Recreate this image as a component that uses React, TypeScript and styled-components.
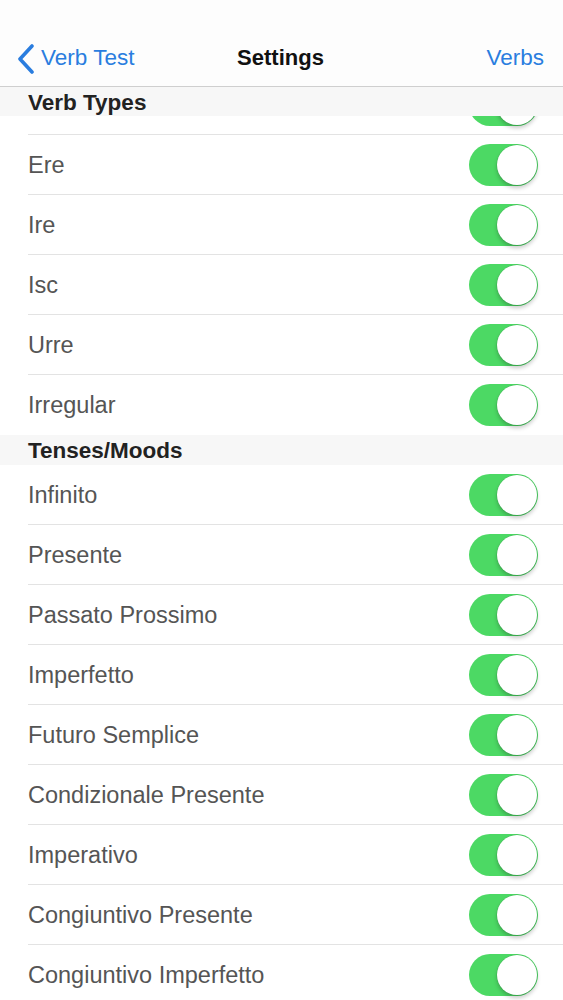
import React from 'react';
import styled, {createGlobalStyle} from "styled-components";

const GlobalStyle = createGlobalStyle`
  html, body {
    margin: 0;
    padding: 0;
    background: #ffffff;
  }
  body {
    font-family: "Liberation Sans", Arial, Helvetica, sans-serif;
  }
`

const verbTypes = ['Ere', 'Ire', 'Isc', 'Urre', 'Irregular'];
const tenses = [
    'Infinito',
    'Presente',
    'Passato Prossimo',
    'Imperfetto',
    'Futuro Semplice',
    'Condizionale Presente',
    'Imperativo',
    'Congiuntivo Presente',
    'Congiuntivo Imperfetto',
];

const Toggle = () => (
    <Track>
        <Knob/>
    </Track>
);

export default function App() {
    return (
        <>
            <GlobalStyle/>
            <Screen>
                <NavBar>
                    <BackButton>
                        <svg width="17" height="30" viewBox="0 0 17 30">
                            <path d="M15 2 L3 15 L15 28" fill="none" stroke="#2a7ddf" strokeWidth="3.6"
                                  strokeLinecap="round" strokeLinejoin="round"/>
                        </svg>
                        <NavLink>Verb Test</NavLink>
                    </BackButton>
                    <NavTitle>Settings</NavTitle>
                    <RightSlot>
                        <NavLink>Verbs</NavLink>
                    </RightSlot>
                </NavBar>

                <SectionHeader>Verb Types</SectionHeader>
                {/* row scrolled under the sticky header, only its bottom edge shows */}
                <PeekRow>
                    <Toggle/>
                </PeekRow>
                {verbTypes.map((v, i) => (
                    <Row key={v} $last={i === verbTypes.length - 1}>
                        <Label>{v}</Label>
                        <Toggle/>
                    </Row>
                ))}

                <SectionHeader $tall>Tenses/Moods</SectionHeader>
                {tenses.map((t) => (
                    <Row key={t}>
                        <Label>{t}</Label>
                        <Toggle/>
                    </Row>
                ))}
            </Screen>
        </>
    );
}

const Screen = styled.div`
  width: 563px;
  height: 1000px;
  overflow: hidden;
  background: #ffffff;
`
const NavBar = styled.header`
  height: 87px;
  box-sizing: border-box;
  padding: 30px 19px 0 17px;
  display: grid;
  grid-template-columns: 1fr auto 1fr;
  align-items: center;
  border-bottom: 1px solid #cfcfcf;
  background: #fdfdfd;
`
const BackButton = styled.div`
  display: flex;
  align-items: center;
  gap: 7px;
  svg {
    display: block;
    margin-top: 1px;
  }
`
const NavLink = styled.span`
  color: #2a7ddf;
  font-size: 22.5px;
`
const NavTitle = styled.h1`
  margin: 0;
  color: #111111;
  font-size: 22px;
  font-weight: 700;
  text-align: center;
`
const RightSlot = styled.div`
  display: flex;
  justify-content: flex-end;
`
const SectionHeader = styled.h2<{ $tall?: boolean }>`
  margin: 0;
  height: ${p => p.$tall ? 30 : 29}px;
  box-sizing: border-box;
  padding: 2px 0 0 28px;
  display: flex;
  align-items: center;
  background: #f7f7f7;
  color: #222222;
  font-size: 22.5px;
  font-weight: 700;
`
const PeekRow = styled.div`
  height: 19px;
  margin-left: 28px;
  padding-right: 25px;
  overflow: hidden;
  display: flex;
  justify-content: flex-end;
  align-items: flex-end;
  padding-bottom: 8px;
  box-sizing: border-box;
  border-bottom: 1px solid #e3e3e3;
`
const Row = styled.div<{ $last?: boolean }>`
  height: 59px;
  margin-left: 28px;
  padding-right: 25px;
  display: flex;
  justify-content: space-between;
  align-items: center;
  border-bottom: 1px solid ${p => p.$last ? 'transparent' : '#e3e3e3'};
`
const Label = styled.span`
  color: #555555;
  font-size: 23.5px;
  padding-top: 1px;
`
const Track = styled.div`
  width: 69px;
  height: 42px;
  border-radius: 21px;
  background: #4cd964;
  display: flex;
  align-items: center;
  justify-content: flex-end;
  padding: 1px;
  box-sizing: border-box;
  flex-shrink: 0;
`
const Knob = styled.div`
  width: 40px;
  height: 40px;
  border-radius: 50%;
  background: #ffffff;
  box-shadow: 0 3px 4px rgba(0, 0, 0, 0.22), 0 0 0 0.5px rgba(0, 0, 0, 0.12);
`
